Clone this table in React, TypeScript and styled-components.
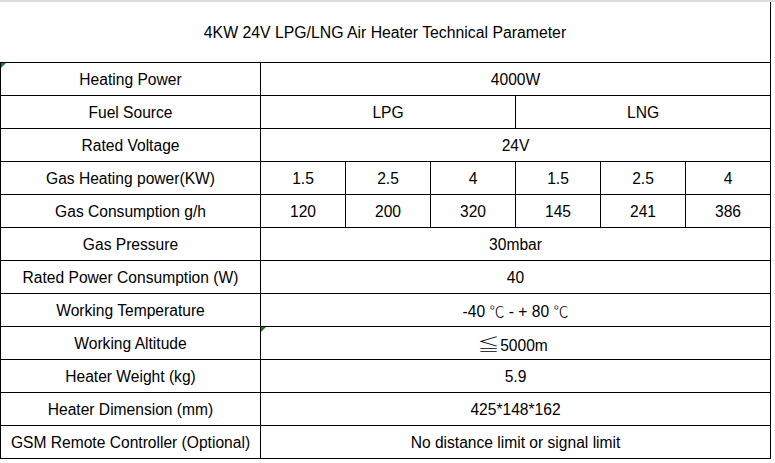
import styled, { createGlobalStyle } from "styled-components";

const GlobalStyle = createGlobalStyle`
  html, body {
    margin: 0;
    padding: 0;
    background: #fff;
  }
  body {
    font-family: "Liberation Sans", Arial, sans-serif;
    color: #000;
  }
`;

type Row = {
  label: string;
  values: string[];
  span?: number;
  mark?: boolean;
  markValue?: boolean;
};

// span = how many of the 6 value columns each value covers
const rows: Row[] = [
  { label: "Heating Power", values: ["4000W"], span: 6, mark: true },
  { label: "Fuel Source", values: ["LPG", "LNG"], span: 3 },
  { label: "Rated Voltage", values: ["24V"], span: 6 },
  { label: "Gas Heating power(KW)", values: ["1.5", "2.5", "4", "1.5", "2.5", "4"], span: 1 },
  { label: "Gas Consumption g/h", values: ["120", "200", "320", "145", "241", "386"], span: 1 },
  { label: "Gas Pressure", values: ["30mbar"], span: 6 },
  { label: "Rated Power Consumption (W)", values: ["40"], span: 6 },
  { label: "Working Temperature", values: ["-40 ℃ - + 80 ℃"], span: 6 },
  { label: "Working Altitude", values: ["≦5000m"], span: 6, markValue: true },
  { label: "Heater Weight (kg)", values: ["5.9"], span: 6 },
  { label: "Heater Dimension (mm)", values: ["425*148*162"], span: 6 },
  { label: "GSM Remote Controller (Optional)", values: ["No distance limit or signal limit"], span: 6 },
];

// symbols come from a CJK font in the original sheet (full width)
const renderValue = (v: string) => {
  const parts = v.split(/([℃≦])/);
  return (
    <span>
      {parts.map((p, i) => {
        if (p === "℃") return <Sym key={i}>{p}</Sym>;
        if (p === "≦") return <LessEq key={i}>{p}</LessEq>;
        return p;
      })}
    </span>
  );
};

const App = () => {
  return (
    <>
      <GlobalStyle />
      <TopRule />
      <Sheet>
        <TitleRow>4KW 24V LPG/LNG Air Heater Technical Parameter</TitleRow>
        {rows.map((row) => (
          <TableRow key={row.label}>
            <LabelCell>
              {row.mark && <Marker />}
              {row.label}
            </LabelCell>
            {row.values.map((v, i) => (
              <ValueCell key={i} $span={row.span || 1}>
                {row.markValue && i === 0 && <Marker />}
                {renderValue(v)}
              </ValueCell>
            ))}
          </TableRow>
        ))}
      </Sheet>
    </>
  );
};

export default App;

const TopRule = styled.div`
  height: 2px;
  background: #dcdcdc;
`;

const Sheet = styled.div`
  width: 771px;
  display: flex;
  flex-direction: column;
`;

const TitleRow = styled.div`
  height: 59px;
  padding-top: 1px;
  border-right: 1px solid #000;
  border-bottom: 1px solid #000;
  display: flex;
  align-items: center;
  justify-content: center;
  font-size: 15.8px;
`;

const TableRow = styled.div`
  display: flex;
  height: 32px;
  border-bottom: 1px solid #000;
`;

const Cell = styled.div`
  position: relative;
  box-sizing: border-box;
  display: flex;
  align-items: center;
  justify-content: center;
  font-size: 15.6px;
  white-space: nowrap;
  border-right: 1px solid #000;
  padding-top: 1px;
`;

const LabelCell = styled(Cell)`
  width: 261px;
  border-left: 1px solid #000;
`;

const ValueCell = styled(Cell)<{ $span: number }>`
  width: ${(p) => p.$span * 85}px;
`;

const Marker = styled.span`
  position: absolute;
  left: 0;
  top: 0;
  width: 0;
  height: 0;
  border-top: 5px solid #1e7b1e;
  border-right: 5px solid transparent;
`;

const Sym = styled.span`
  font-family: "Noto Sans CJK SC", "DejaVu Sans", sans-serif;
  font-size: 15px;
  font-weight: 300;
`;

const LessEq = styled(Sym)`
  display: inline-block;
  font-size: 17px;
  margin: 0 3px 0 -3px;
  transform: scaleX(1.3);
`;
